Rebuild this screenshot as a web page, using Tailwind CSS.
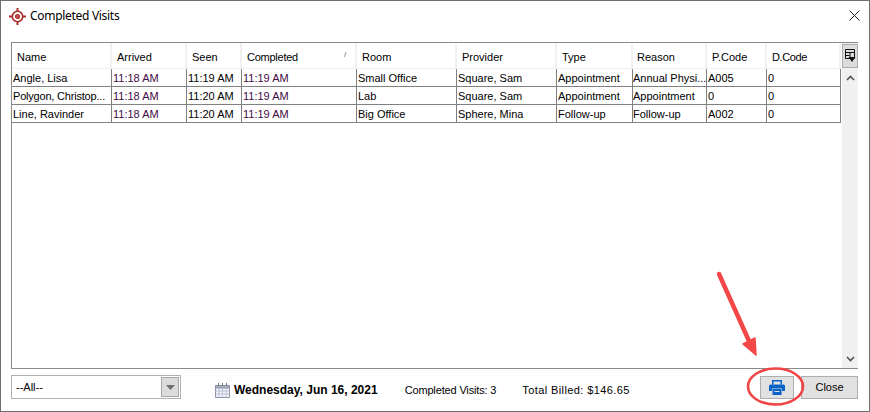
<!DOCTYPE html>
<html>
	<head>
		<meta charset="UTF-8" />
		<title>Completed Visits</title>
		<script src="https://cdn.jsdelivr.net/npm/@tailwindcss/browser@4"></script>
	</head>
	<body>
		<div class="relative flex flex-col w-[870px] h-[412px] overflow-hidden bg-white border-x-[1px] border-t-[1px] border-b-[1px] border-[#707070] font-['Liberation_Sans',sans-serif] text-[11px] text-black">
			<!-- title bar -->
			<div class="flex items-center h-[30px] pl-[8px] pr-[9px] shrink-0">
				<svg class="w-[17px] h-[17px]" viewBox="0 0 17 17" fill="none" stroke="#a8302a">
					<circle cx="8.5" cy="8.5" r="5.2" stroke-width="1.6" />
					<circle cx="8.5" cy="8.5" r="2" fill="#c9574f" stroke-width="1.2" />
					<path d="M8.5 0v3.5M8.5 13.5V17M0 8.5h3.5M13.5 8.5H17" stroke-width="2" />
				</svg>
				<span class="ml-[4px] font-['Noto_Sans',sans-serif] text-[12px] tracking-[-0.3px]">Completed Visits</span>
				<svg class="ml-auto mb-[1px] w-[11px] h-[11px]" viewBox="0 0 11 11" stroke="#222" stroke-width="1" fill="none">
					<path d="M0.5 0.5l10 10M10.5 0.5l-10 10" />
				</svg>
			</div>

			<!-- table box -->
			<div class="flex h-[327px] ml-[10px] mr-[11px] mt-[11px] border-[1px] border-[#8a8a8a] shrink-0">
				<div class="w-[829px]">
					<div class="grid grid-cols-[100px_75px_55px_115px_100px_100px_76px_74px_60px_74px] h-[26px] items-center border-b-[1px] border-[#f0f0f0] [&>*]:h-full [&>*]:flex [&>*]:items-center [&>*]:pl-[5px] [&>*]:pt-[3px] [&>*]:border-r-[2px] [&>*]:border-[#f0f0f0]">
						<div>Name</div>
						<div>Arrived</div>
						<div>Seen</div>
						<div class="relative tracking-[-0.25px]">Completed<span class="absolute right-[9px] top-[6px] text-[8px] text-[#555]">/</span></div>
						<div>Room</div>
						<div>Provider</div>
						<div>Type</div>
						<div class="pl-[4px]!">Reason</div>
						<div>P.Code</div>
						<div class="tracking-[-0.4px]">D.Code</div>
					</div>
					<div class="grid grid-cols-[100px_75px_55px_115px_100px_100px_76px_74px_60px_74px] h-[18px] border-b-[1px] border-[#808080] [&>*]:flex [&>*]:items-center [&>*]:pl-[1px] [&>*]:pt-[1px] [&>*]:border-r-[1px] [&>*]:border-[#808080] [&>*]:whitespace-nowrap">
						<div>Angle, Lisa</div>
						<div class="text-[#3f0a45]">11:18 AM</div>
						<div>11:19 AM</div>
						<div class="text-[#3f0a45]">11:19 AM</div>
						<div>Small Office</div>
						<div>Square, Sam</div>
						<div>Appointment</div>
						<div class="pl-0!">Annual Physi...</div>
						<div>A005</div>
						<div>0</div>
					</div>
					<div class="grid grid-cols-[100px_75px_55px_115px_100px_100px_76px_74px_60px_74px] h-[18px] border-b-[1px] border-[#808080] [&>*]:flex [&>*]:items-center [&>*]:pl-[1px] [&>*]:pt-[1px] [&>*]:border-r-[1px] [&>*]:border-[#808080] [&>*]:whitespace-nowrap">
						<div class="tracking-[-0.2px]">Polygon, Christop...</div>
						<div class="text-[#3f0a45]">11:18 AM</div>
						<div>11:20 AM</div>
						<div class="text-[#3f0a45]">11:19 AM</div>
						<div>Lab</div>
						<div>Square, Sam</div>
						<div>Appointment</div>
						<div class="pl-0!">Appointment</div>
						<div>0</div>
						<div>0</div>
					</div>
					<div class="grid grid-cols-[100px_75px_55px_115px_100px_100px_76px_74px_60px_74px] h-[18px] border-b-[1px] border-[#808080] [&>*]:flex [&>*]:items-center [&>*]:pl-[1px] [&>*]:pt-[1px] [&>*]:border-r-[1px] [&>*]:border-[#808080] [&>*]:whitespace-nowrap">
						<div>Line, Ravinder</div>
						<div class="text-[#3f0a45]">11:18 AM</div>
						<div>11:20 AM</div>
						<div class="text-[#3f0a45]">11:19 AM</div>
						<div>Big Office</div>
						<div>Sphere, Mina</div>
						<div>Follow-up</div>
						<div class="pl-0!">Follow-up</div>
						<div>A002</div>
						<div>0</div>
					</div>
				</div>
				<!-- scrollbar -->
				<div class="flex flex-col items-center w-[16px] ml-[1px] bg-[#f0f0f0]">
					<div class="flex items-center justify-center w-[16px] h-[24px] mt-[1px] bg-[#dcdcdc] border-[1px] border-[#ababab]">
						<svg class="w-[12px] h-[14px]" viewBox="0 0 12 14" fill="none" stroke="#111">
							<path d="M1.5 0.5h9v9h-9zM1.5 3.5h9M1.5 6.5h4M6 3.5v6" />
							<path d="M4.5 8h7L8 13z" fill="#111" stroke="none" />
						</svg>
					</div>
					<svg class="mt-[7px] w-[9px] h-[6px]" viewBox="0 0 9 6" fill="none" stroke="#505050" stroke-width="1.6">
						<path d="M1 5l3.5-3.5L8 5" />
					</svg>
					<svg class="mt-auto mb-[6px] w-[9px] h-[6px]" viewBox="0 0 9 6" fill="none" stroke="#505050" stroke-width="1.6">
						<path d="M1 1l3.5 3.5L8 1" />
					</svg>
				</div>
			</div>

			<!-- footer -->
			<div class="flex items-center h-[24px] ml-[10px] mr-[11px] mt-[6px] shrink-0">
				<div class="flex items-center justify-between w-[170px] h-[24px] pl-[4px] pr-[1px] border-[1px] border-[#b0b0b0]">
					<span class="pt-[1px]">--All--</span>
					<span class="flex items-center justify-center w-[18px] h-[20px] bg-[#dcdcdc] border-[1px] border-[#a8a8a8]">
						<svg class="w-[9px] h-[5px]" viewBox="0 0 9 5"><path d="M0 0h9L4.5 5z" fill="#707070" /></svg>
					</span>
				</div>
				<div class="flex items-center mt-[6px]">
					<svg class="ml-[33px] w-[17px] h-[16px]" viewBox="0 0 17 16" fill="#eef1f7" stroke="#8b93a6">
						<path d="M1.5 3.5h14v12h-14z" />
						<path d="M1.5 3.5h14v2.5h-14z" fill="#aab0bd" />
						<path d="M1.5 9h14M1.5 12h14M5 6v9.5M8.5 6v9.5M12 6v9.5" stroke="#b4bdd2" stroke-width="0.8" />
						<path d="M4.5 1v3M8.5 1v3M12.5 1v3" stroke="#777" />
					</svg>
					<span class="ml-[3px] font-bold text-[12px]">Wednesday, Jun 16, 2021</span>
					<span class="ml-[27px] tracking-[-0.15px]">Completed Visits: 3</span>
					<span class="ml-[26px] tracking-[0.4px]">Total Billed: $146.65</span>
				</div>
				<button class="flex items-center justify-center ml-auto w-[34px] h-[23px] bg-[#e1e1e1] border-[1px] border-[#adadad]">
					<svg class="w-[16px] h-[15px]" viewBox="0 0 16 15" fill="#0c63c7">
						<path d="M3 0h10v4.5h-1.5v-3h-7v3H3z" />
						<path d="M1.5 4.5h13A1.5 1.5 0 0 1 16 6v5h-3V8.5H3V11H0V6a1.5 1.5 0 0 1 1.5-1.5z" />
						<path d="M3.5 9h9v6h-9zM5.5 11v1h5v-1z" fill-rule="evenodd" />
					</svg>
				</button>
				<button class="ml-[7px] w-[57px] h-[23px] bg-[#e1e1e1] border-[1px] border-[#adadad]">Close</button>
			</div>

			<!-- red annotation over the window -->
			<svg class="absolute left-[700px] top-[260px] w-[120px] h-[150px]" viewBox="0 0 120 150" fill="none">
				<path d="M18 13L48 80" stroke="#f44848" stroke-width="4.5" stroke-linecap="round" />
				<path d="M54 77L55 94L42 83z" fill="#f44848" stroke="#f44848" stroke-width="1.5" stroke-linejoin="round" />
				<ellipse cx="74.5" cy="125.5" rx="27.5" ry="18" stroke="#f04545" stroke-width="2.6" />
			</svg>
		</div>
	</body>
</html>
